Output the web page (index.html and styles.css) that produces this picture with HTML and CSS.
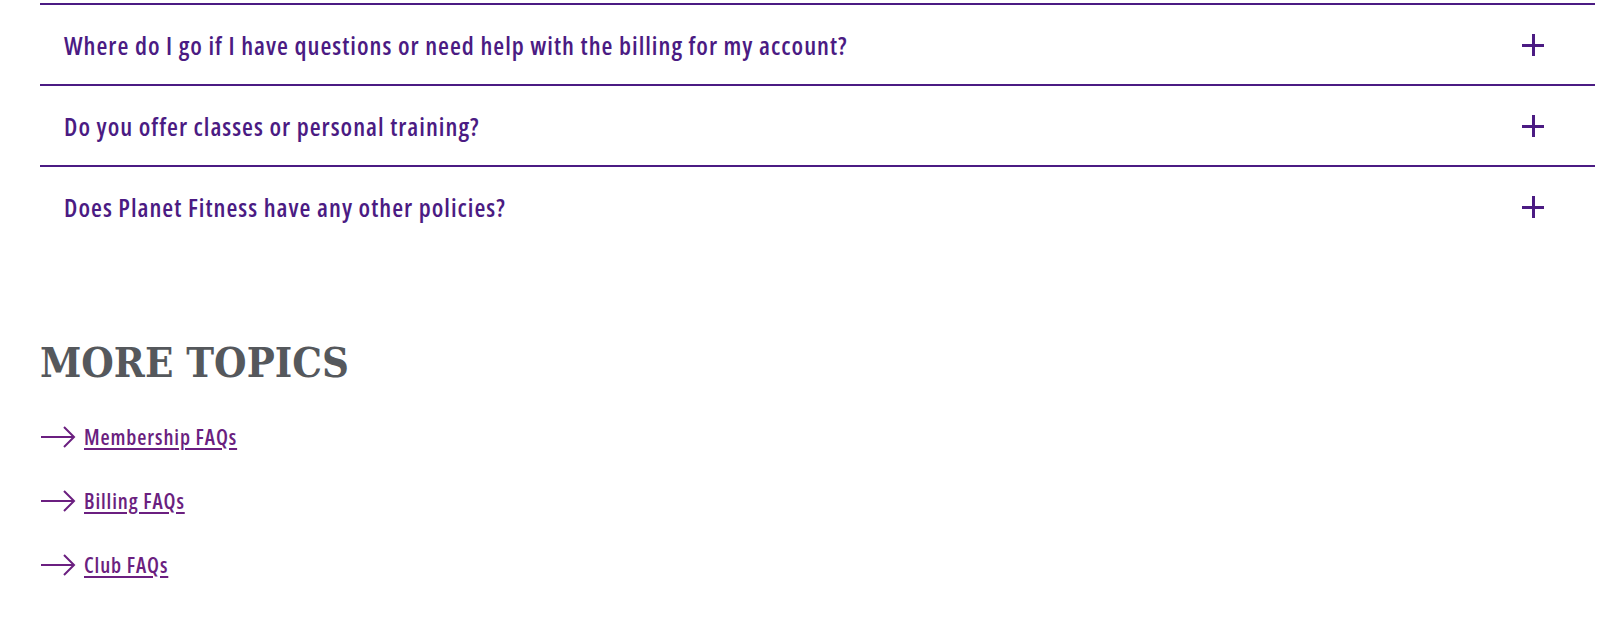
FILE: index.html
```html
<!DOCTYPE html>
<html lang="en">
<head>
    <meta charset="UTF-8">
    <meta name="viewport" content="width=device-width, initial-scale=1.0">
    <title>FAQs</title>
    <link rel="stylesheet" href="styles.css">
</head>
<body>
    <div class="page">
        <div class="faq">
            <div class="faq-item">
                <button class="faq-q">
                    <span class="faq-text">Where do I go if I have questions or need help with the billing for my account?</span>
                    <span class="plus"></span>
                </button>
            </div>
            <div class="faq-item">
                <button class="faq-q">
                    <span class="faq-text">Do you offer classes or personal training?</span>
                    <span class="plus"></span>
                </button>
            </div>
            <div class="faq-item">
                <button class="faq-q">
                    <span class="faq-text">Does Planet Fitness have any other policies?</span>
                    <span class="plus"></span>
                </button>
            </div>
        </div>

        <section class="topics">
            <h2>MORE TOPICS</h2>
            <ul class="topic-list">
                <li>
                    <svg class="arrow" width="36" height="22" viewBox="0 0 36 22"><path d="M1 11H34M24 1L34 11L24 21" fill="none" stroke="currentColor" stroke-width="2"/></svg>
                    <a href="#">Membership FAQs</a>
                </li>
                <li>
                    <svg class="arrow" width="36" height="22" viewBox="0 0 36 22"><path d="M1 11H34M24 1L34 11L24 21" fill="none" stroke="currentColor" stroke-width="2"/></svg>
                    <a href="#">Billing FAQs</a>
                </li>
                <li>
                    <svg class="arrow" width="36" height="22" viewBox="0 0 36 22"><path d="M1 11H34M24 1L34 11L24 21" fill="none" stroke="currentColor" stroke-width="2"/></svg>
                    <a href="#">Club FAQs</a>
                </li>
            </ul>
        </section>
    </div>
</body>
</html>
```

FILE: styles.css
```css
body {
    margin: 0;
    background: #fff;
    font-family: "Open Sans", "DejaVu Sans Condensed", sans-serif;
    font-stretch: 75%;
}

.page {
    padding: 3px 5px 0 40px;
}

.faq-item {
    border-top: 2px solid #4b1b83;
}

.faq-q {
    display: flex;
    align-items: center;
    justify-content: space-between;
    width: 100%;
    height: 79px;
    padding: 0 51px 0 24px;
    border: none;
    background: none;
    font-family: inherit;
    font-stretch: inherit;
    cursor: pointer;
    text-align: left;
}

.faq-text {
    font-size: 25px;
    font-weight: 650;
    letter-spacing: 1px;
    color: #4b1b83;
}

.plus {
    position: relative;
    width: 22px;
    height: 22px;
}

.plus::before,
.plus::after {
    content: "";
    position: absolute;
    background: #4b1b83;
}

.plus::before {
    left: 0;
    right: 0;
    top: 10px;
    height: 3px;
}

.plus::after {
    top: 0;
    bottom: 0;
    left: 10px;
    width: 3px;
}

.topics {
    margin-top: 92px;
}

.topics h2 {
    margin: 0 0 18px;
    font-family: "DejaVu Serif", serif;
    font-stretch: condensed;
    font-size: 41.5px;
    font-weight: 700;
    color: #55585c;
}

.topic-list {
    list-style: none;
    margin: 0;
    padding: 0;
}

.topic-list li {
    display: flex;
    align-items: center;
    gap: 8px;
    height: 64px;
}

.arrow {
    color: #6b1f80;
}

.topic-list a {
    font-size: 21px;
    font-weight: 650;
    letter-spacing: 0.9px;
    color: #6b1f80;
    text-underline-offset: 3px;
}
```
